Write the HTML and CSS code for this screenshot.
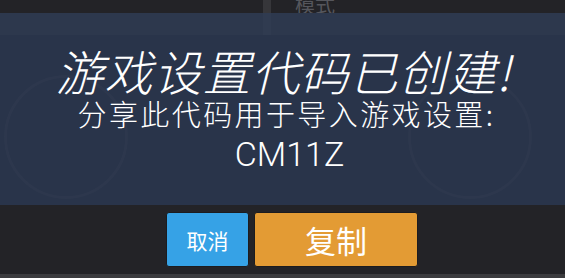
FILE: index.html
```html
<!DOCTYPE html>
<html lang="zh-CN">
<head>
  <meta charset="UTF-8">
  <title>游戏设置代码</title>
  <link rel="stylesheet" href="styles.css">
</head>
<body>
  <div class="topbar">
    <div class="divider"></div>
    <span class="tab-label">模式</span>
  </div>

  <div class="panel">
    <div class="band"><div class="band-divider"></div></div>
    <div class="ring ring-left"></div>
    <div class="ring ring-right"></div>
    <h1 class="title">游戏设置代码已创建!</h1>
    <p class="subtitle">分享此代码用于导入游戏设置:</p>
    <p class="code">CM11Z</p>
  </div>

  <div class="footer">
    <button class="btn btn-cancel">取消</button>
    <button class="btn btn-copy">复制</button>
  </div>
  <div class="bottom-strip"></div>
</body>
</html>
```

FILE: styles.css
```css
body {
  margin: 0;
  width: 565px;
  height: 278px;
  overflow: hidden;
  background-color: #232327;
  font-family: "Noto Sans CJK SC", "Noto Sans", sans-serif;
  color: #fff;
}

.topbar {
  height: 13px;
  background-color: #232327;
  position: relative;
  overflow: hidden;
}

.divider {
  position: absolute;
  left: 263px;
  top: 0;
  width: 8px;
  height: 13px;
  background-color: #36363a;
}

.tab-label {
  position: absolute;
  left: 295px;
  top: -7px;
  font-size: 20px;
  line-height: 24px;
  color: #55565c;
}

.panel {
  position: relative;
  height: 192px;
  background-color: #29344a;
  text-align: center;
  overflow: hidden;
}

.band {
  position: absolute;
  left: 0;
  top: 0;
  width: 100%;
  height: 22px;
  background-color: #2d384d;
}

.band-divider {
  position: absolute;
  left: 263px;
  top: 0;
  width: 8px;
  height: 22px;
  background-color: #303b50;
}

.ring {
  position: absolute;
  width: 118px;
  height: 118px;
  border-radius: 50%;
  border: 3px solid rgba(255, 255, 255, 0.018);
}

.ring-left {
  left: 4px;
  top: 62px;
}

.ring-right {
  left: 408px;
  top: 62px;
}

.title {
  position: relative;
  margin: 31px 0 0;
  padding-left: 2px;
  font-size: 48px;
  line-height: 52px;
  font-weight: 300;
  font-style: italic;
  letter-spacing: 1px;
}

.subtitle {
  position: relative;
  margin: 0;
  padding-left: 8px;
  font-size: 29px;
  line-height: 34px;
  font-weight: 300;
  letter-spacing: 2.4px;
}

.code {
  position: relative;
  margin: 6px 0 0;
  padding-left: 14px;
  font-family: Roboto, "Noto Sans", sans-serif;
  font-size: 34px;
  line-height: 36px;
  font-weight: 300;
  letter-spacing: 0;
}

.footer {
  height: 69px;
  display: flex;
  justify-content: center;
  align-items: center;
  gap: 5px;
  padding-left: 19px;
  box-sizing: border-box;
  background-color: #232327;
}

.btn {
  height: 55px;
  border: 1px solid #1c1c1f;
  border-radius: 3px;
  color: #fff;
  font-family: "Noto Sans CJK SC", sans-serif;
  cursor: pointer;
}

.btn-cancel {
  width: 83px;
  background-color: #36a2e6;
  font-size: 21px;
}

.btn-copy {
  width: 164px;
  background-color: #e39b34;
  font-size: 31px;
}

.bottom-strip {
  height: 4px;
  background-color: #3b3b3e;
}
```
